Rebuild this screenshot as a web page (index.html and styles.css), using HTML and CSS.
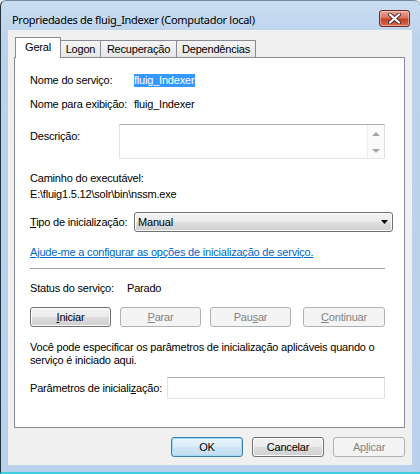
FILE: index.html
```html
<!DOCTYPE html>
<html lang="pt-BR">
<head>
  <meta charset="UTF-8" />
  <title>Propriedades de fluig_Indexer (Computador local)</title>
  <link rel="stylesheet" href="styles.css">
</head>
<body>
  <div class="window">
    <div class="titlebar">
      <span class="title">Propriedades de fluig_Indexer (Computador local)</span>
      <button class="close" aria-label="Fechar">
        <svg width="13" height="11" viewBox="0 0 13 11">
          <path d="M2 1.5 L11 9.5 M11 1.5 L2 9.5" stroke="#4a2a28" stroke-width="4" stroke-linecap="round" />
          <path d="M2 1.5 L11 9.5 M11 1.5 L2 9.5" stroke="#ffffff" stroke-width="2.2" stroke-linecap="round" />
        </svg>
      </button>
    </div>

    <div class="client">
      <div class="tabs">
        <div class="tab active">Geral</div>
        <div class="tab w-logon">Logon</div>
        <div class="tab w-rec">Recuperação</div>
        <div class="tab w-dep">Dependências</div>
      </div>

      <div class="panel">
        <div class="row">
          <span class="label w104">Nome do serviço:</span>
          <span class="selected">fluig_Indexer</span>
        </div>
        <div class="row gap11">
          <span class="label w104">Nome para exibição:</span>
          <span>fluig_Indexer</span>
        </div>

        <div class="desc-row">
          <span class="label w89 desc-label">Descrição:</span>
          <div class="desc-box">
            <div class="scroll">
              <span class="arrow up"></span>
              <span class="arrow down"></span>
            </div>
          </div>
        </div>

        <div class="path">
          <div>Caminho do executável:</div>
          <div>E:\fluig1.5.12\solr\bin\nssm.exe</div>
        </div>

        <div class="type-row">
          <span class="label w104"><u>T</u>ipo de inicialização:</span>
          <div class="select">
            <span>Manual</span>
            <svg width="7" height="4" viewBox="0 0 7 4"><path d="M0 0 H7 L3.5 4 Z" fill="#000" /></svg>
          </div>
        </div>

        <a class="help" href="#">Ajude-me a configurar as opções de inicialização de serviço.</a>

        <div class="sep"></div>

        <div class="row status">
          <span class="label w97">Status do serviço:</span>
          <span>Parado</span>
        </div>

        <div class="actions">
          <button class="btn"><u>I</u>niciar</button>
          <button class="btn" disabled><u>P</u>arar</button>
          <button class="btn" disabled>Pau<u>s</u>ar</button>
          <button class="btn last" disabled><u>C</u>ontinuar</button>
        </div>

        <p class="note">Você pode especificar os parâmetros de inicialização aplicáveis quando o<br>serviço é iniciado aqui.</p>

        <div class="params-row">
          <span class="label w137">Parâmetros de iniciali<u>z</u>ação:</span>
          <div class="field"></div>
        </div>
      </div>

      <div class="footer">
        <button class="btn small default">OK</button>
        <button class="btn small">Cancelar</button>
        <button class="btn small" disabled>Ap<u>l</u>icar</button>
      </div>
    </div>
  </div>
</body>
</html>
```

FILE: styles.css
```css
body {
  margin: 0;
  background: #e9ecef;
  font-family: "Liberation Sans", Arial, sans-serif;
  font-size: 11px;
  letter-spacing: -0.2px;
  color: #000;
}
.window {
  width: 420px;
  height: 474px;
  box-sizing: border-box;
  border-left: 1px solid #26323d;
  border-top: 1px solid #6f8aa5;
  border-bottom: 2px solid #3fcfe0;
  border-radius: 6px 6px 0 0;
  padding: 0 8px 7px 7px;
  background: linear-gradient(#c9ddf1, #bcd3ec 40px, #b9d1ea);
  display: flex;
  flex-direction: column;
}
.titlebar {
  height: 29px;
  display: flex;
  justify-content: space-between;
  align-items: flex-start;
}
.title {
  font-family: "Noto Sans", sans-serif;
  font-size: 11px;
  letter-spacing: -0.3px;
  line-height: 16px;
  padding: 11px 0 0 4px;
  color: #000;
}
.close {
  width: 31px;
  height: 17px;
  margin: 9px 2px 0 0;
  padding: 0;
  border: 1px solid #6d2b23;
  border-radius: 3px;
  background: linear-gradient(#eaa595, #d87560 45%, #c63f27 55%, #d86d55);
  box-shadow: inset 0 0 0 1px rgba(255, 220, 210, 0.5);
  display: flex;
  align-items: center;
  justify-content: center;
}
.client {
  flex: 1;
  background: #f0f0f0;
  padding: 0 7px 0 6px;
  display: flex;
  flex-direction: column;
}
.tabs {
  display: flex;
  align-items: flex-end;
  height: 20px;
  padding: 7px 0 0 1px;
}
.tab {
  height: 17px;
  box-sizing: border-box;
  border: 1px solid #898c95;
  border-bottom: none;
  background: linear-gradient(#f4f4f4, #e6e6e6);
  text-align: center;
  line-height: 16px;
  margin-left: -1px;
}
.tab.active {
  width: 46px;
  height: 21px;
  margin-left: 0;
  margin-bottom: -1px;
  background: #fff;
  line-height: 19px;
  position: relative;
  z-index: 1;
}
.w-logon { width: 41px; }
.w-rec { width: 77px; }
.w-dep { width: 80px; }
.panel {
  height: 371px;
  box-sizing: border-box;
  border: 1px solid #898c95;
  background: #fff;
  padding: 16px 19px 0 15px;
  display: flex;
  flex-direction: column;
  align-items: flex-start;
  white-space: nowrap;
}
.row {
  display: flex;
  line-height: 13px;
}
.gap11 { margin-top: 11px; }
.label { flex: none; }
.w104 { width: 104px; }
.w97 { width: 97px; }
.w89 { width: 89px; }
.w137 { width: 137px; }
.selected {
  background: #3399ff;
  color: #fff;
  padding: 0 1px 0 0;
}
.desc-row {
  display: flex;
  margin-top: 13px;
  width: 355px;
}
.desc-label {
  padding-top: 6px;
  line-height: 13px;
}
.desc-box {
  width: 266px;
  height: 35px;
  box-sizing: border-box;
  border: 1px solid;
  border-color: #abadb3 #dbdfe6 #e3e9ef #e2e3ea;
  display: flex;
  justify-content: flex-end;
}
.scroll {
  width: 17px;
  box-sizing: border-box;
  border-left: 1px solid #ececec;
  background: #fafafa;
  display: flex;
  flex-direction: column;
  justify-content: space-between;
  align-items: center;
  padding: 7px 0 5px;
}
.arrow {
  width: 0;
  height: 0;
  border-left: 4px solid transparent;
  border-right: 4px solid transparent;
}
.arrow.up { border-bottom: 4px solid #a6a6a6; }
.arrow.down { border-top: 4px solid #a6a6a6; }
.path {
  margin-top: 11px;
  line-height: 16px;
}
.type-row {
  display: flex;
  align-items: center;
  margin-top: 10px;
}
.select {
  width: 259px;
  height: 20px;
  box-sizing: border-box;
  border: 1px solid #707070;
  border-radius: 3px;
  background: linear-gradient(#f2f2f2, #ebebeb 50%, #dddddd 50%, #cfcfcf);
  box-shadow: inset 0 0 0 1px #fbfbfb;
  display: flex;
  align-items: center;
  justify-content: space-between;
  padding: 0 4px 0 3px;
}
.help {
  margin-top: 14px;
  line-height: 13px;
  color: #0066cc;
}
.sep {
  margin-top: 9px;
  width: 355px;
  height: 1px;
  background: #a0a0a0;
  border-bottom: 1px solid #fff;
}
.status {
  margin-top: 12px;
}
.actions {
  margin-top: 12px;
  width: 355px;
  display: flex;
  gap: 9px;
}
.btn {
  width: 81px;
  height: 20px;
  box-sizing: border-box;
  padding: 0;
  border: 1px solid #707070;
  border-radius: 3px;
  background: linear-gradient(#f2f2f2, #ebebeb 50%, #dddddd 50%, #cfcfcf);
  box-shadow: inset 0 0 0 1px #fcfcfc;
  font-family: "Liberation Sans", Arial, sans-serif;
  font-size: 11px;
  letter-spacing: -0.2px;
  color: #000;
}
.btn.last {
  width: 82px;
  margin-left: auto;
}
.btn:disabled {
  border-color: #adb2b5;
  background: #f4f4f4;
  box-shadow: none;
  color: #838383;
}
.btn.default {
  border-color: #3c7fb1;
  background: linear-gradient(#e9f4fb, #dcecf8 50%, #cfe4f4 50%, #c3dcef);
  box-shadow: inset 0 0 0 1px #9fdcf7;
}
.note {
  margin: 14px 0 0;
  line-height: 13px;
}
.params-row {
  display: flex;
  align-items: center;
  margin-top: 10px;
}
.field {
  width: 218px;
  height: 22px;
  box-sizing: border-box;
  border: 1px solid;
  border-color: #abadb3 #dbdfe6 #e3e9ef #e2e3ea;
  background: #fff;
}
.footer {
  display: flex;
  justify-content: flex-end;
  gap: 9px;
  padding-top: 9px;
}
.btn.small {
  width: 72px;
}
```
